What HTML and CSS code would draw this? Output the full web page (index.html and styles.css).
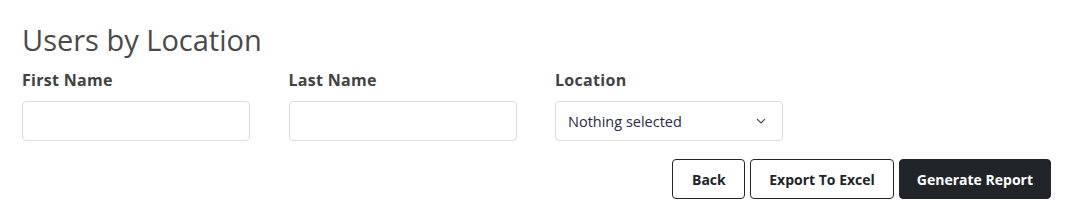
FILE: index.html
```html
<!DOCTYPE html>
<html lang="en">
<head>
    <meta charset="UTF-8">
    <meta name="viewport" content="width=device-width, initial-scale=1.0">
    <title>Users by Location</title>
    <link rel="stylesheet" href="styles.css">
</head>
<body>
    <div class="report">
        <h1>Users by Location</h1>

        <div class="filters">
            <div class="form-group">
                <label for="firstName">First Name</label>
                <input type="text" id="firstName">
            </div>
            <div class="form-group">
                <label for="lastName">Last Name</label>
                <input type="text" id="lastName">
            </div>
            <div class="form-group">
                <label for="location">Location</label>
                <div class="select" id="location">
                    <span>Nothing selected</span>
                    <svg class="caret" width="10" height="6" viewBox="0 0 10 6"><path d="M1 1l4 4 4-4" fill="none" stroke="#555" stroke-width="1.2"/></svg>
                </div>
            </div>
        </div>

        <div class="actions">
            <button class="btn btn-back">Back</button>
            <button class="btn">Export To Excel</button>
            <button class="btn btn-dark">Generate Report</button>
        </div>
    </div>
</body>
</html>
```

FILE: styles.css
```css
body {
    margin: 0;
    font-family: "Open Sans", Arial, sans-serif;
    color: #444;
    background: #fff;
}
.report {
    padding: 21px 17px 0 22px;
}
h1 {
    margin: 0 0 11px;
    font-size: 29px;
    font-weight: 400;
    line-height: 38px;
    color: #4a4a4a;
}
.filters {
    display: grid;
    grid-template-columns: repeat(3, 228px);
    column-gap: 38.5px;
}
label {
    display: block;
    margin-bottom: 11px;
    font-size: 16px;
    font-weight: 700;
    line-height: 20px;
    letter-spacing: 0.3px;
    color: #424242;
}
input, .select {
    box-sizing: border-box;
    width: 100%;
    height: 40px;
    border: 1px solid #ddd;
    border-radius: 4px;
    font: inherit;
}
.select {
    display: flex;
    align-items: center;
    justify-content: space-between;
    padding: 0 12px;
    font-size: 14.5px;
    color: #2d2a48;
}
.caret {
    margin-right: 4px;
}
.actions {
    display: flex;
    justify-content: flex-end;
    gap: 5px;
    margin-top: 18px;
}
.btn {
    height: 40px;
    padding: 0 18px;
    border: 1px solid #212529;
    border-radius: 4px;
    background: #fff;
    color: #212529;
    font-family: inherit;
    font-size: 14px;
    font-weight: 700;
    cursor: pointer;
}
.btn-back {
    padding: 0 18.5px;
}
.btn-dark {
    background: #212529;
    color: #fff;
    padding: 0 17px;
}
```
